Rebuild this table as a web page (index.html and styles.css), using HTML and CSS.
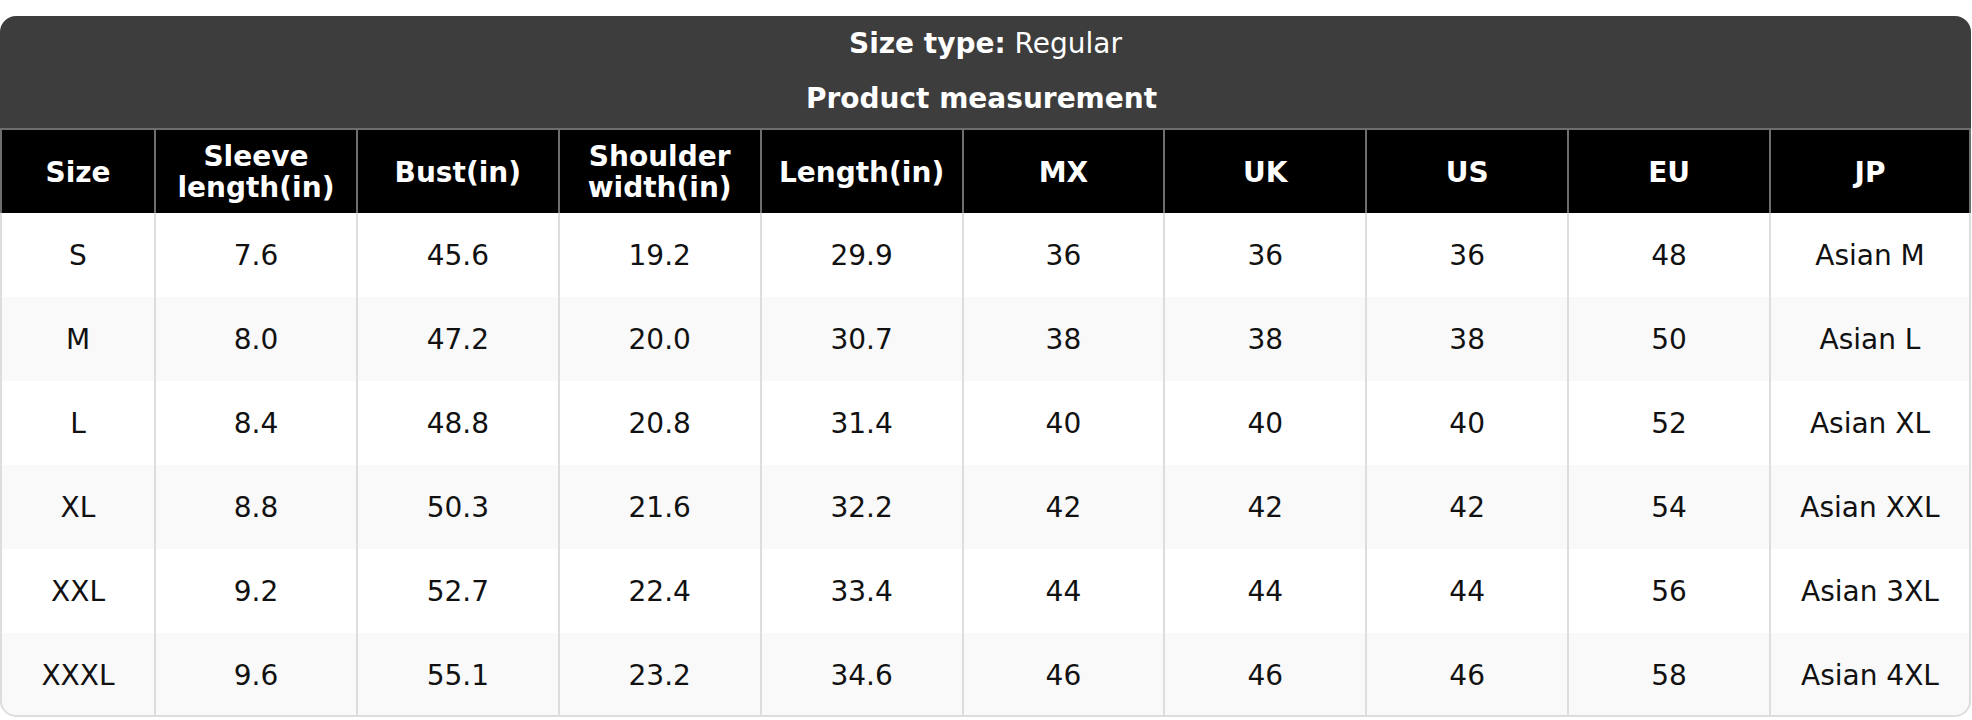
FILE: index.html
```html
<!DOCTYPE html>
<html lang="en">
<head>
<meta charset="utf-8">
<title>Size chart</title>
<link rel="stylesheet" href="styles.css">
</head>
<body>
<div class="chart">
  <div class="chart-head">
    <div class="chart-line"><strong>Size type:</strong> Regular</div>
    <div class="chart-line chart-title">Product measurement</div>
  </div>
  <table class="size-table">
    <colgroup>
      <col class="col-size">
      <col><col><col><col><col><col><col><col><col>
    </colgroup>
    <thead>
      <tr>
        <th>Size</th>
        <th>Sleeve<br>length(in)</th>
        <th>Bust(in)</th>
        <th>Shoulder<br>width(in)</th>
        <th>Length(in)</th>
        <th>MX</th>
        <th>UK</th>
        <th>US</th>
        <th>EU</th>
        <th>JP</th>
      </tr>
    </thead>
    <tbody>
      <tr><td>S</td><td>7.6</td><td>45.6</td><td>19.2</td><td>29.9</td><td>36</td><td>36</td><td>36</td><td>48</td><td>Asian M</td></tr>
      <tr><td>M</td><td>8.0</td><td>47.2</td><td>20.0</td><td>30.7</td><td>38</td><td>38</td><td>38</td><td>50</td><td>Asian L</td></tr>
      <tr><td>L</td><td>8.4</td><td>48.8</td><td>20.8</td><td>31.4</td><td>40</td><td>40</td><td>40</td><td>52</td><td>Asian XL</td></tr>
      <tr><td>XL</td><td>8.8</td><td>50.3</td><td>21.6</td><td>32.2</td><td>42</td><td>42</td><td>42</td><td>54</td><td>Asian XXL</td></tr>
      <tr><td>XXL</td><td>9.2</td><td>52.7</td><td>22.4</td><td>33.4</td><td>44</td><td>44</td><td>44</td><td>56</td><td>Asian 3XL</td></tr>
      <tr><td>XXXL</td><td>9.6</td><td>55.1</td><td>23.2</td><td>34.6</td><td>46</td><td>46</td><td>46</td><td>58</td><td>Asian 4XL</td></tr>
    </tbody>
  </table>
</div>
</body>
</html>
```
FILE: styles.css
```css
html, body {
  margin: 0;
  padding: 0;
  background: #ffffff;
}

body {
  font-family: "DejaVu Sans", "Liberation Sans", sans-serif;
  font-size: 28px;
  color: #111111;
  padding-top: 16px;
}

.chart {
  position: relative;
  width: 1971px;
  border-radius: 16px;
  overflow: hidden;
  background: #ffffff;
}

.chart::after {
  content: "";
  position: absolute;
  left: 0;
  right: 0;
  top: 197px;
  bottom: 0;
  border: 2px solid #dddddd;
  border-top: 0;
  border-radius: 0 0 16px 16px;
  pointer-events: none;
}

.chart-head {
  background: #3d3d3d;
  color: #ffffff;
  text-align: center;
  padding-bottom: 2px;
}

.chart-line {
  line-height: 55px;
}

.chart-title {
  font-weight: bold;
  padding-right: 8px;
}

.size-table {
  width: 1971px;
  table-layout: fixed;
  border-collapse: separate;
  border-spacing: 0;
}

.col-size {
  width: 154px;
}

.size-table th {
  background: #000000;
  color: #ffffff;
  font-weight: bold;
  line-height: 31px;
  padding: 11px 0 10px;
  border-top: 2px solid #6e6e6e;
  border-left: 2px solid #6e6e6e;
  text-align: center;
  vertical-align: middle;
}

.size-table th:last-child {
  border-right: 2px solid #6e6e6e;
}

.size-table td {
  line-height: 32px;
  padding: 27px 0 25px;
  border-left: 2px solid #dddddd;
  text-align: center;
  vertical-align: middle;
}

.size-table td:last-child {
  border-right: 2px solid #dddddd;
}

.size-table tbody tr:nth-child(even) td {
  background: #f9f9f9;
}
```
